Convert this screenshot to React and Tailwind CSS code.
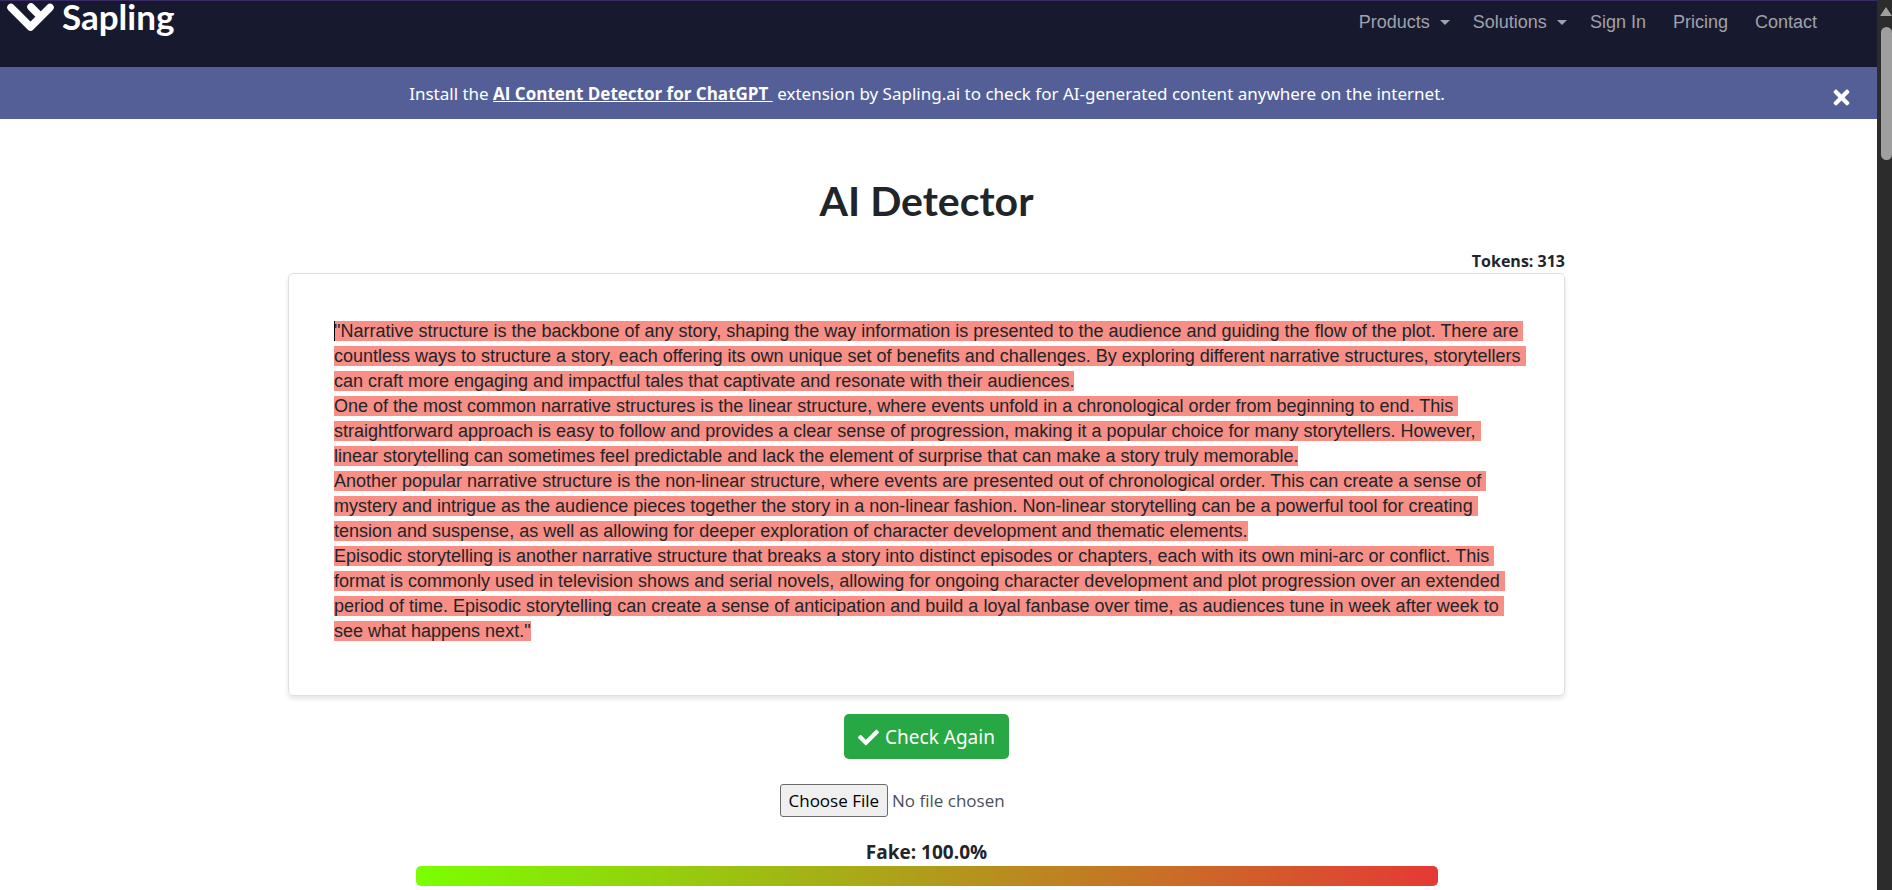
import { FaCheck, FaTimes } from 'react-icons/fa';

const navLinks = [
  { label: 'Products', menu: true },
  { label: 'Solutions', menu: true },
  { label: 'Sign In' },
  { label: 'Pricing' },
  { label: 'Contact' },
];

const sampleText = [
  '"Narrative structure is the backbone of any story, shaping the way information is presented to the audience and guiding the flow of the plot. There are countless ways to structure a story, each offering its own unique set of benefits and challenges. By exploring different narrative structures, storytellers can craft more engaging and impactful tales that captivate and resonate with their audiences.',
  'One of the most common narrative structures is the linear structure, where events unfold in a chronological order from beginning to end. This straightforward approach is easy to follow and provides a clear sense of progression, making it a popular choice for many storytellers. However, linear storytelling can sometimes feel predictable and lack the element of surprise that can make a story truly memorable.',
  'Another popular narrative structure is the non-linear structure, where events are presented out of chronological order. This can create a sense of mystery and intrigue as the audience pieces together the story in a non-linear fashion. Non-linear storytelling can be a powerful tool for creating tension and suspense, as well as allowing for deeper exploration of character development and thematic elements.',
  'Episodic storytelling is another narrative structure that breaks a story into distinct episodes or chapters, each with its own mini-arc or conflict. This format is commonly used in television shows and serial novels, allowing for ongoing character development and plot progression over an extended period of time. Episodic storytelling can create a sense of anticipation and build a loyal fanbase over time, as audiences tune in week after week to see what happens next."',
];

function Logo() {
  return (
    <a href="#" className="flex items-start gap-2 text-white">
      <svg viewBox="0 0 48 30" className="h-[30px] w-12" fill="none" stroke="currentColor" strokeWidth="7.5" strokeLinecap="round" strokeLinejoin="round">
        <path d="M5 6.5 L24.5 26 L44 6.5" />
        <path d="M25 6 L33 14" />
      </svg>
      <span className="font-['Lato',sans-serif] text-[35px] leading-[30px] font-bold">Sapling</span>
    </a>
  );
}

function Header() {
  return (
    <header className="flex h-[67px] items-start justify-between border-t border-[#3b2a63] bg-[#171a2f] pr-[60px] pl-1.5">
      <Logo />
      <nav className="flex items-center gap-[27px] pt-2 font-['Liberation_Sans',Arial,sans-serif] text-lg leading-[27px] text-[#a0a1aa]">
        {navLinks.map((link) =>
          link.menu ? (
            <button key={link.label} type="button" className="-mr-1 flex items-center gap-2.5">
              {link.label}
              <span className="border-x-5 border-t-5 border-x-transparent border-t-current" />
            </button>
          ) : (
            <a key={link.label} href="#">{link.label}</a>
          )
        )}
      </nav>
    </header>
  );
}

function Banner() {
  return (
    <div className="flex h-[52px] items-center bg-[#545f98] px-6 text-white">
      <p className="flex-1 pt-0.5 text-center font-['Noto_Sans',sans-serif] text-[17px]">
        Install the{' '}
        <a href="#" className="font-['Open_Sans',sans-serif] font-bold whitespace-pre underline">{'AI Content Detector for ChatGPT '}</a>
        {' '}extension by Sapling.ai to check for AI-generated content anywhere on the internet.
      </p>
      <button type="button" aria-label="Close" className="mt-2">
        <FaTimes className="size-[23px]" />
      </button>
    </div>
  );
}

function ScrollBar() {
  return (
    <div className="flex w-[15px] shrink-0 flex-col items-end gap-[11px] bg-[#2c2c2c] pt-[7px]">
      <span className="border-x-6 border-b-9 border-x-transparent border-b-[#9f9f9f]" />
      <span className="h-[133px] w-[11px] rounded-full bg-[#9f9f9f]" />
    </div>
  );
}

export default function App() {
  return (
    <div className="flex h-screen overflow-hidden bg-white font-['Open_Sans','Noto_Sans',sans-serif] text-[#212529]">
      <div className="min-w-0 flex-1">
        <Header />
        <Banner />

        <main className="flex flex-col items-center pt-[55px] pr-6">
          <h1 className="font-['Lato',sans-serif] text-[41px] leading-[54px] font-bold">AI Detector</h1>

          <div className="mt-[21px] w-full max-w-[1277px]">
            <p className="text-right text-base leading-6 font-bold">Tokens: 313</p>
            <div
              role="textbox"
              aria-label="Text to check"
              aria-multiline="true"
              className="relative rounded-[5px] border border-[#dee0e2] pt-[45px] pr-[41px] pb-[51px] pl-[45px] font-['Liberation_Sans',Arial,sans-serif] text-lg leading-[25px] shadow-[0_3px_5px_rgba(0,0,0,0.1)]"
            >
              <span className="absolute mt-0.5 h-5 w-px bg-black" />
              {sampleText.map((paragraph, i) => (
                <p key={i} className="whitespace-pre-wrap">
                  <span className="bg-[#f78f87]">{paragraph}</span>
                </p>
              ))}
            </div>
          </div>

          <button type="button" className="mt-[18px] flex h-[45px] items-center gap-1.5 rounded-[5px] bg-[#28a745] px-3.5 pt-0.5 font-['Noto_Sans',sans-serif] text-[19px] text-white">
            <FaCheck className="size-[21px]" />
            Check Again
          </button>

          <input
            type="file"
            aria-label="Upload a file"
            className="mt-[25px] mr-5 w-[274px] text-[17px] leading-[25px] text-[#495057] file:mr-1 file:h-[33px] file:rounded-[3px] file:border file:border-solid file:border-[#6b6b6b] file:bg-[#efefef] file:px-2 file:text-black"
          />

          <p className="mt-[22px] text-[19px] leading-[27px] font-bold">Fake: 100.0%</p>
          <div className="h-5 w-full max-w-[1022px] rounded-[5px] bg-[linear-gradient(90deg,#7bff00,#e53935)]" />
        </main>
      </div>
      <ScrollBar />
    </div>
  );
}
